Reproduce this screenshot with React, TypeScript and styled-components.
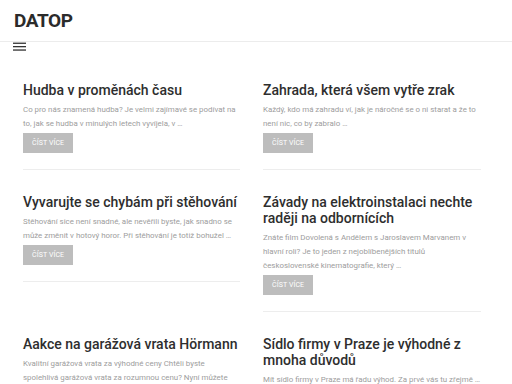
import React from "react";
import styled, { createGlobalStyle } from "styled-components";

const Global = createGlobalStyle`
  html, body { margin: 0; padding: 0; background: #fff; }
  body { font-family: Roboto, "Liberation Sans", sans-serif; color: #333; }
`;

const Header = styled.header`
  padding: 9px 14px 8px;
  border-bottom: 1px solid #ececec;
`;

const Logo = styled.div`
  font-size: 19px;
  line-height: 24px;
  font-weight: 700;
  letter-spacing: -0.4px;
  color: #2b2b2b;
`;

const MenuBar = styled.div`
  padding: 0 13px;
  height: 9px;
  display: flex;
  align-items: flex-start;
`;

const Main = styled.main`
  display: grid;
  grid-template-columns: 217px 218px;
  column-gap: 23px;
  row-gap: 24px;
  align-items: start;
  padding: 31px 0 0 23px;
`;

const Article = styled.article`
  display: flex;
  flex-direction: column;
  align-items: flex-start;
  padding-bottom: 16px;
  border-bottom: 1px solid #ededed;
`;

const Title = styled.h2`
  margin: 0;
  font-size: 14px;
  line-height: 16px;
  font-weight: 500;
  color: #2e2e2e;
`;

const Excerpt = styled.p`
  margin: 5px 0 2px;
  font-size: 7.9px;
  line-height: 14px;
  color: #9d9d9d;
`;

const ReadMore = styled.a`
  display: flex;
  align-items: center;
  height: 20px;
  padding: 0 9px;
  background: #bdbdbd;
  color: #fff;
  font-size: 7px;
  text-transform: uppercase;
  text-decoration: none;
  letter-spacing: 0.1px;
`;

const posts = [
  {
    title: "Hudba v proměnách času",
    text: "Co pro nás znamená hudba? Je velmi zajímavé se podívat na to, jak se hudba v minulých letech vyvíjela, v …",
  },
  {
    title: "Zahrada, která všem vytře zrak",
    text: "Každý, kdo má zahradu ví, jak je náročné se o ni starat a že to není nic, co by zabralo …",
  },
  {
    title: "Vyvarujte se chybám při stěhování",
    text: "Stěhování sice není snadné, ale nevěřili byste, jak snadno se může změnit v hotový horor. Při stěhování je totiž bohužel …",
  },
  {
    title: "Závady na elektroinstalaci nechte raději na odbornících",
    text: "Znáte film Dovolená s Andělem s Jaroslavem Marvanem v hlavní roli? Je to jeden z nejoblíbenějších titulů československé kinematografie, který …",
  },
  {
    title: "Aakce na garážová vrata Hörmann",
    text: "Kvalitní garážová vrata za výhodné ceny Chtěli byste spolehlivá garážová vrata za rozumnou cenu? Nyní můžete využít akční nabídky …",
  },
  {
    title: "Sídlo firmy v Praze je výhodné z mnoha důvodů",
    text: "Mít sídlo firmy v Praze má řadu výhod. Za prvé vás tu zřejmě …",
  },
];

export default function App() {
  return (
    <>
      <Global />
      <Header>
        <Logo>DATOP</Logo>
      </Header>
      <MenuBar>
        <svg width="13" height="9" viewBox="0 0 13 9">
          <rect x="0" y="0.6" width="13" height="1.3" fill="#333" />
          <rect x="0" y="4" width="13" height="1.3" fill="#333" />
          <rect x="0" y="7.4" width="13" height="1.3" fill="#333" />
        </svg>
      </MenuBar>
      <Main>
        {posts.map((p) => (
          <Article key={p.title}>
            <Title>{p.title}</Title>
            <Excerpt>{p.text}</Excerpt>
            <ReadMore href="#">Číst více</ReadMore>
          </Article>
        ))}
      </Main>
    </>
  );
}
